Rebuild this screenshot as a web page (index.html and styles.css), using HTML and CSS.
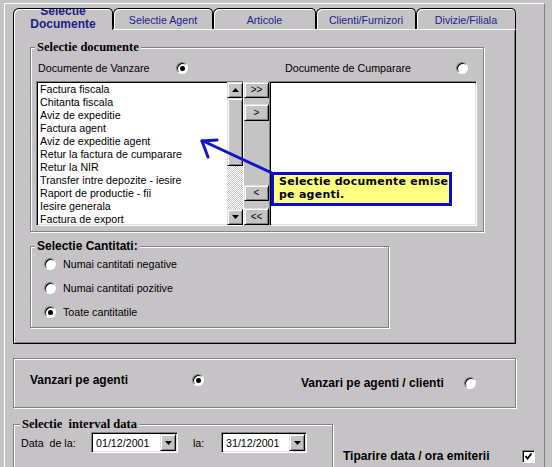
FILE: index.html
```html
<!DOCTYPE html>
<html>
<head>
<meta charset="utf-8">
<link rel="stylesheet" href="styles.css">
</head>
<body>
<div class="window">
  <div class="tabs">
    <div class="tab active"><span class="tab-two">Selectie<br>Documente</span></div>
    <div class="tab">Selectie Agent</div>
    <div class="tab wide">Articole</div>
    <div class="tab">Clienti/Furnizori</div>
    <div class="tab">Divizie/Filiala</div>
  </div>
  <div class="panel">
    <div class="group g-docs">
      <div class="legend serif"><span>Selectie documente</span></div>
      <div class="docrow">
        <span class="l1">Documente de Vanzare</span><i class="radio on"></i>
        <span class="l2">Documente de Cumparare</span><i class="radio"></i>
      </div>
      <div class="lists">
        <div class="listbox">
          <div class="items">
            <div>Factura fiscala</div>
            <div>Chitanta fiscala</div>
            <div>Aviz de expeditie</div>
            <div>Factura agent</div>
            <div>Aviz de expeditie agent</div>
            <div>Retur la factura de cumparare</div>
            <div>Retur la NIR</div>
            <div>Transfer intre depozite - iesire</div>
            <div>Raport de productie - fii</div>
            <div>Iesire generala</div>
            <div>Factura de export</div>
          </div>
          <div class="vscroll">
            <div class="sbtn"><svg width="7" height="4" viewBox="0 0 7 4"><polygon points="0,4 7,4 3.5,0" fill="#000"/></svg></div>
            <div class="thumb"></div>
            <div class="track"></div>
            <div class="sbtn"><svg width="7" height="4" viewBox="0 0 7 4"><polygon points="0,0 7,0 3.5,4" fill="#000"/></svg></div>
          </div>
        </div>
        <div class="btncol">
          <div class="mbtn b1">&gt;&gt;</div>
          <div class="mbtn b2">&gt;</div>
          <div class="mbtn b3">&lt;</div>
          <div class="mbtn b4">&lt;&lt;</div>
        </div>
        <div class="listbox list2"></div>
      </div>
      <svg class="arrow" width="90" height="50" viewBox="0 0 90 50">
        <g stroke="#1414c8" stroke-width="3" fill="none" stroke-linecap="round">
          <line x1="13" y1="11" x2="82" y2="43"/>
          <line x1="12" y1="11" x2="27" y2="10"/>
          <line x1="12" y1="11" x2="18" y2="27"/>
        </g>
      </svg>
      <div class="callout">Selectie documente emise<br>pe agenti.</div>
    </div>
    <div class="group g-cant">
      <div class="legend bold"><span>Selectie Cantitati:</span></div>
      <div class="radrow first"><i class="radio"></i><span>Numai cantitati negative</span></div>
      <div class="radrow"><i class="radio"></i><span>Numai cantitati pozitive</span></div>
      <div class="radrow"><i class="radio on"></i><span>Toate cantitatile</span></div>
    </div>
  </div>
  <div class="group g-vanz">
    <div class="v1"><span class="bold vl1">Vanzari pe agenti</span><i class="radio on"></i></div>
    <div class="v2"><span class="bold vl2">Vanzari pe agenti / clienti</span><i class="radio"></i></div>
  </div>
  <div class="bottom">
    <div class="group g-data">
      <div class="legend serif"><span>Selectie  interval data</span></div>
      <div class="daterow">
        <span class="dl">Data  de la:</span>
        <div class="combo c1"><span>01/12/2001</span><div class="drop"><svg width="7" height="4" viewBox="0 0 7 4"><polygon points="0,0 7,0 3.5,4" fill="#000"/></svg></div></div>
        <span class="la">la:</span>
        <div class="combo c2"><span>31/12/2001</span><div class="drop"><svg width="7" height="4" viewBox="0 0 7 4"><polygon points="0,0 7,0 3.5,4" fill="#000"/></svg></div></div>
      </div>
    </div>
    <div class="tiparire">
      <span class="bold tl">Tiparire data / ora emiterii</span>
      <span class="check"><svg width="9" height="9" viewBox="0 0 9 9"><polyline points="1.5,4 3.5,6.5 7.5,1.5" fill="none" stroke="#000" stroke-width="1.8"/></svg></span>
    </div>
  </div>
</div>
</body>
</html>
```
FILE: styles.css
```css
html, body {
  margin: 0;
  padding: 0;
  overflow: hidden;
}
body {
  background: #c6c3c6;
  font-family: "Liberation Sans", Arial, sans-serif;
  font-size: 10.7px;
  color: #000;
}
.window {
  margin: 3px 0 0 4px;
  width: 541px;
  height: 464px;
  overflow: hidden;
  box-sizing: border-box;
  border-top: 1px solid #fff;
  border-left: 1px solid #fff;
  border-right: 1px solid #808080;
  padding: 4px 0 0 8px;
}
.tabs {
  display: flex;
  height: 21px;
  align-items: flex-start;
}
.tab {
  width: 100px;
  height: 21px;
  box-sizing: border-box;
  border: 1px solid #000;
  border-bottom: none;
  border-radius: 6px 5px 0 0;
  box-shadow: inset 1px 1px 0 #fff;
  display: flex;
  align-items: center;
  justify-content: center;
  color: #1c1c8c;
  padding-top: 1px;
}
.tab.wide { width: 103px; }
.tab.active {
  height: 22px;
  position: relative;
  z-index: 1;
  background: #c6c3c6;
  overflow: hidden;
  align-items: flex-end;
  padding: 0;
}
.tab-two {
  font-weight: bold;
  font-size: 12px;
  line-height: 13px;
  text-align: center;
  margin-bottom: -1px;
}
.panel {
  width: 503px;
  height: 315px;
  box-sizing: border-box;
  border: 1px solid #000;
  border-top-color: #fff;
  box-shadow: inset 1px 0 0 #fff, inset -1px -1px 0 #808080;
  padding: 17px 0 0 16px;
}
.group {
  position: relative;
  box-sizing: border-box;
  border: 1px solid #808080;
  box-shadow: inset 1px 1px 0 #fff, 1px 1px 0 #fff;
}
.legend {
  height: 13px;
  line-height: 13px;
  margin-top: -7px;
  margin-left: 4px;
  white-space: pre;
}
.legend span {
  background: #c6c3c6;
  padding: 0 2px;
}
.serif {
  font-family: "Liberation Serif", "Times New Roman", serif;
  font-weight: bold;
  font-size: 12.5px;
}
.bold {
  font-weight: bold;
  font-size: 12px;
}
.g-docs {
  width: 454px;
  padding: 0 0 5px 0;
}
.docrow {
  display: flex;
  align-items: center;
  height: 16px;
  margin-top: 6px;
  padding-left: 7px;
}
.docrow .l1 { width: 138px; }
.docrow .l2 { margin-left: 97px; width: 171px; }
.radio {
  display: block;
  flex: none;
  position: relative;
  width: 12px;
  height: 12px;
  box-sizing: border-box;
  border-radius: 50%;
  background: #fff;
  border: 1px solid;
  border-color: #808080 #fff #fff #808080;
  box-shadow: inset 1px 1px 0 #000;
}
.radio.on::after {
  content: "";
  position: absolute;
  left: 2.5px;
  top: 2.5px;
  width: 5px;
  height: 5px;
  border-radius: 50%;
  background: #000;
}
.lists {
  display: flex;
  margin-top: 5px;
  padding-left: 5px;
  height: 145px;
}
.listbox {
  width: 208px;
  height: 145px;
  box-sizing: border-box;
  border: 1px solid;
  border-color: #808080 #fff #fff #808080;
  box-shadow: inset 1px 1px 0 #000, inset -1px -1px 0 #dfdfdf;
  background: #fff;
  display: flex;
}
.items {
  flex: 1;
  padding: 1px 0 0 3px;
  line-height: 13px;
  white-space: nowrap;
  overflow: hidden;
}
.vscroll {
  width: 16px;
  display: flex;
  flex-direction: column;
  background: #c6c3c6;
}
.sbtn, .thumb, .mbtn, .drop {
  box-sizing: border-box;
  background: #c6c3c6;
  border: 1px solid;
  border-color: #dfdfdf #000 #000 #dfdfdf;
  box-shadow: inset 1px 1px 0 #fff, inset -1px -1px 0 #808080;
}
.sbtn {
  height: 16px;
  display: flex;
  align-items: center;
  justify-content: center;
}
.thumb { height: 68px; }
.track {
  flex: 1;
  background: repeating-conic-gradient(#fff 0 25%, #c6c3c6 0 50%) 0 0 / 2px 2px;
}
.btncol {
  width: 25px;
  display: flex;
  flex-direction: column;
  padding-top: 1px;
}
.mbtn {
  height: 16px;
  display: flex;
  align-items: center;
  justify-content: center;
  font-size: 10px;
  line-height: 10px;
}
.mbtn.b2 { margin-top: 6px; height: 17px; }
.mbtn.b3 { margin-top: 64px; }
.mbtn.b4 { margin-top: 7px; height: 17px; }
.arrow {
  position: absolute;
  left: 159px;
  top: 82px;
}
.callout {
  position: absolute;
  left: 240px;
  top: 124px;
  width: 181px;
  height: 34px;
  box-sizing: border-box;
  border: 3px solid #0a0ac8;
  background: #ffff80;
  font-family: "DejaVu Sans", sans-serif;
  font-weight: bold;
  font-size: 11px;
  letter-spacing: 0.25px;
  line-height: 13px;
  padding-left: 5px;
  white-space: nowrap;
}
.g-cant {
  width: 359px;
  margin-top: 14px;
  padding: 0 0 7px 0;
}
.radrow {
  display: flex;
  align-items: center;
  gap: 7px;
  height: 16px;
  padding-left: 13px;
  margin-top: 8px;
}
.radrow.first { margin-top: 3px; }
.g-vanz {
  width: 503px;
  height: 50px;
  margin-top: 14px;
  display: flex;
  align-items: flex-start;
  padding-left: 16px;
}
.v1, .v2 {
  display: flex;
  align-items: center;
  height: 16px;
}
.v1 { margin-top: 13px; }
.v2 { margin-top: 16px; margin-left: 97px; }
.vl1 { width: 162px; }
.vl2 { width: 163px; }
.bottom {
  display: flex;
  align-items: flex-start;
  margin-top: 16px;
}
.g-data {
  width: 320px;
  height: 44px;
}
.g-data .legend { margin-left: 6px; }
.daterow {
  display: flex;
  align-items: center;
  height: 21px;
  margin-top: 1px;
  padding-left: 7px;
}
.dl { width: 70px; white-space: pre; }
.la { margin-left: 15px; width: 28px; }
.combo {
  height: 21px;
  box-sizing: border-box;
  background: #fff;
  border: 1px solid;
  border-color: #808080 #fff #fff #808080;
  box-shadow: inset 1px 1px 0 #000, inset -1px -1px 0 #dfdfdf;
  display: flex;
  align-items: center;
  justify-content: space-between;
  padding: 1px;
}
.combo span { padding-left: 3px; }
.c1 { width: 87px; }
.c2 { width: 86px; }
.drop {
  width: 16px;
  height: 17px;
  display: flex;
  align-items: center;
  justify-content: center;
}
.tiparire {
  display: flex;
  align-items: center;
  height: 14px;
  margin-left: 10px;
  margin-top: 25px;
}
.tl { width: 179px; }
.check {
  width: 13px;
  height: 13px;
  box-sizing: border-box;
  background: #fff;
  border: 1px solid;
  border-color: #808080 #fff #fff #808080;
  box-shadow: inset 1px 1px 0 #000;
  display: flex;
  align-items: center;
  justify-content: center;
}
```
